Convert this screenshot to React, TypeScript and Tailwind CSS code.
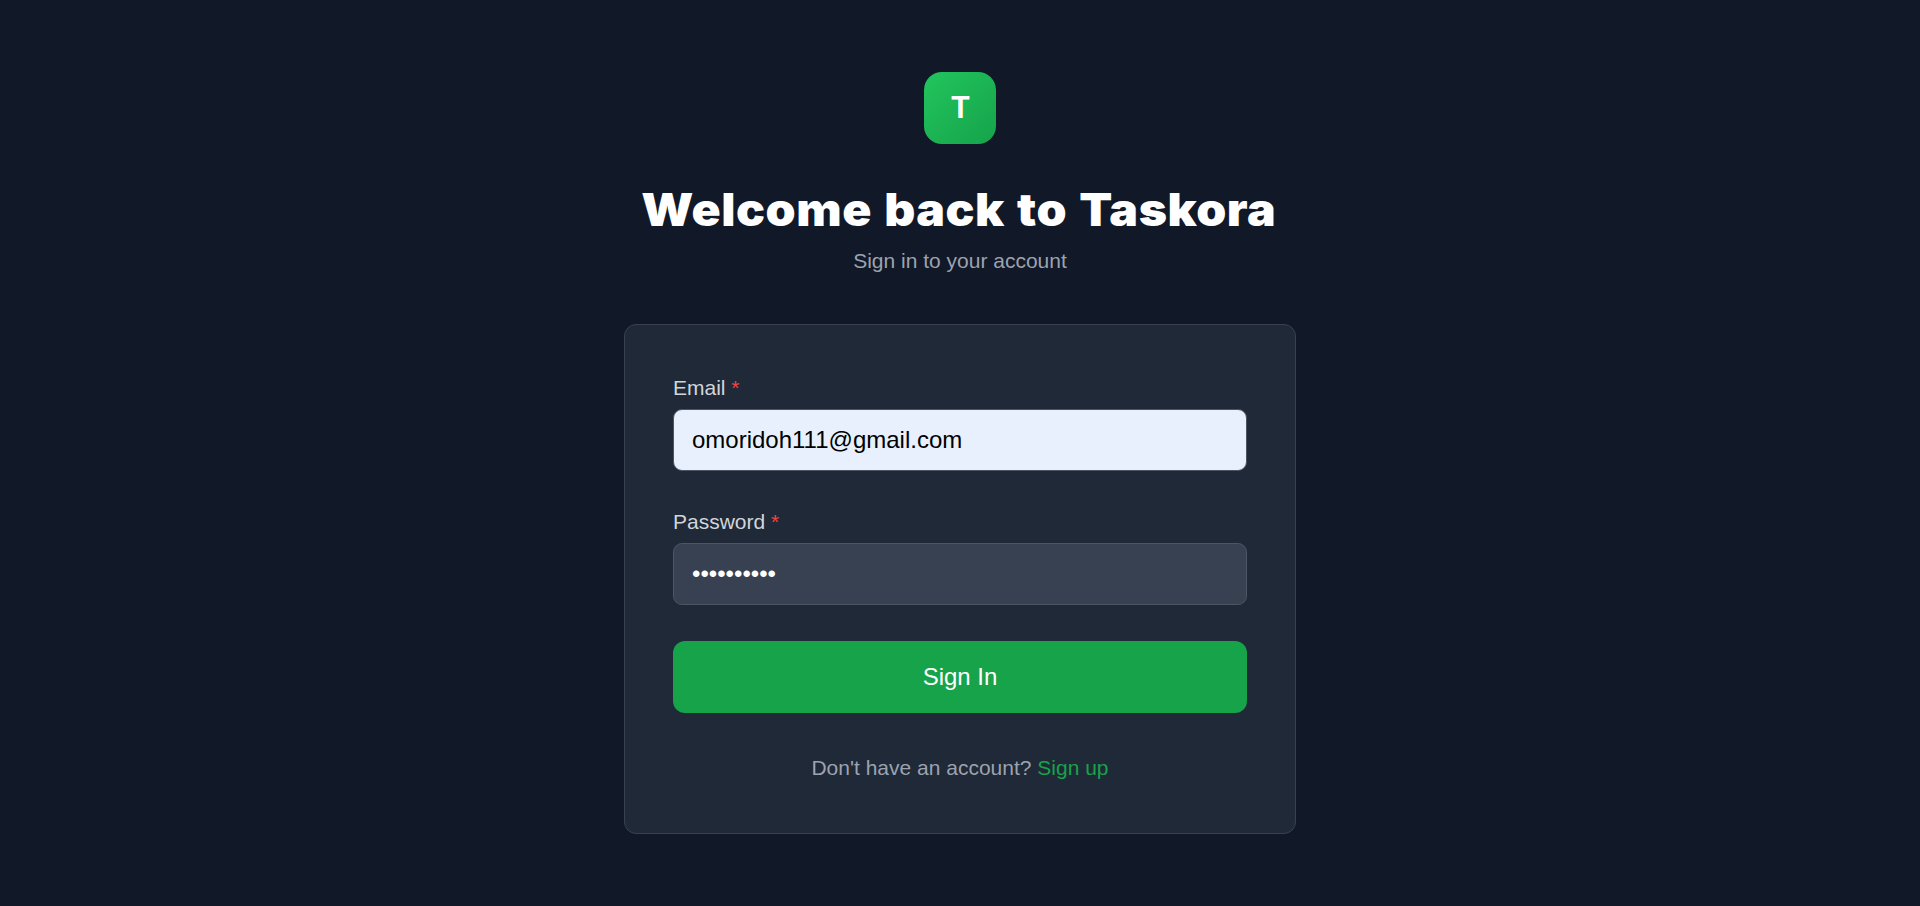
import React from "react";

type FieldProps = {
  id: string;
  label: string;
  type: string;
  value: string;
  className: string;
};

function Field({ id, label, type, value, className }: FieldProps) {
  return (
    <div>
      <label htmlFor={id} className="block text-[21px] leading-[30px] text-[#d1d5db]">
        {label} <span className="text-[#ef4444]">*</span>
      </label>
      <input
        id={id}
        type={type}
        defaultValue={value}
        className={`mt-1.5 block h-[62px] w-full rounded-[9px] border border-[#4b5563] px-[18px] text-2xl outline-none ${className}`}
      />
    </div>
  );
}

export default function App() {
  return (
    <div className="flex min-h-screen flex-col items-center bg-[#111827] pt-[72px] font-['Liberation_Sans',Arial,sans-serif]">
      <div className="flex size-[72px] items-center justify-center rounded-[18px] bg-linear-to-br from-[#22c55e] to-[#16a34a] pb-[3px] pl-px text-[30px] font-bold text-white">
        <span className="scale-y-[1.07]">T</span>
      </div>
      <h1 className="mt-9 mr-[3px] h-[54px] scale-x-[1.07] font-['Arial_Black',Inter,sans-serif] text-[45px] leading-[59px] font-black tracking-[0.5px] whitespace-nowrap text-white [word-spacing:2px]">
        Welcome back to Taskora
      </h1>
      <p className="mt-3 text-[21px] leading-[30px] text-[#9ca3af]">Sign in to your account</p>

      <form className="mt-12 flex h-[510px] w-[672px] flex-col rounded-xl border border-[#374151] bg-[#1f2937] p-12">
        <div className="flex flex-col gap-9">
          <Field
            id="email"
            label="Email"
            type="email"
            value="omoridoh111@gmail.com"
            className="bg-[#e8f0fe] text-black"
          />
          <Field
            id="password"
            label="Password"
            type="password"
            value="abcdefghij"
            className="bg-[#374151] text-white"
          />
          <button type="button" className="h-[72px] rounded-xl bg-[#16a34a] text-2xl text-white">
            Sign In
          </button>
        </div>
        <p className="mt-10 text-center text-[21px] leading-[30px] text-[#9ca3af]">
          Don't have an account? <a className="text-[#16a34a]">Sign up</a>
        </p>
      </form>
    </div>
  );
}
